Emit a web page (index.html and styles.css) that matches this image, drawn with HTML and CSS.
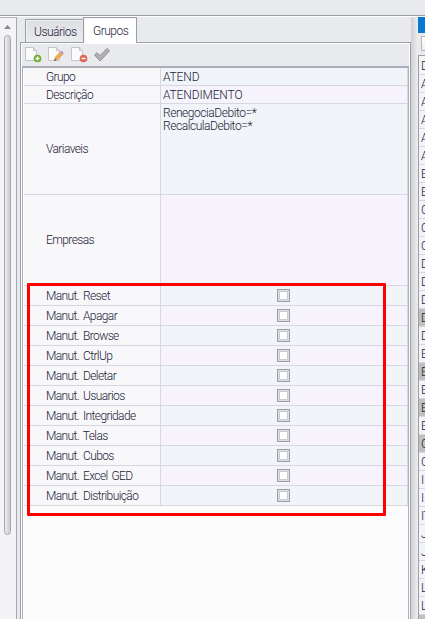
FILE: index.html
```html
<!DOCTYPE html>
<html lang="pt-BR">
<head>
<meta charset="utf-8">
<title>Grupos</title>
<link rel="stylesheet" href="styles.css">
</head>
<body>
<div class="topbar"></div>
<div class="workspace">
  <aside class="left"><div class="arrow"></div><div class="thumb"></div></aside>
  <main class="center">
    <nav class="tabs"><div class="tab">Usuários</div><div class="tab active">Grupos</div></nav>
    <section class="panel">
      <div class="toolbar">
        <svg width="18" height="18" viewBox="0 0 18 18"><path class="page" d="M.5 1.5h8l3 3v10h-11z"/><path class="fold" d="M8.5 1.5v3h3"/><circle cx="12.5" cy="12.5" r="3.8" fill="#6dac2e"/><path class="sign" d="M10.5 12.5h4M12.5 10.5v4"/></svg>
        <svg width="18" height="18" viewBox="0 0 18 18"><path class="page" d="M.5 1.5h8l3 3v10h-11z"/><path class="fold" d="M8.5 1.5v3h3"/><path d="M6.5 14.5l1-3.5 5-5 2.3 2.3-5 5z" fill="#f2ae48" stroke="#bd853e" stroke-width=".6"/><path d="M12 6l1.5-1.4 2.5 2.5-1.5 1.4z" fill="#c695c7"/><path d="M6 15l1-2.2 1.3 1.2z" fill="#554b46"/></svg>
        <svg width="18" height="18" viewBox="0 0 18 18"><path class="page" d="M.5 1.5h8l3 3v10h-11z"/><path class="fold" d="M8.5 1.5v3h3"/><circle cx="12.5" cy="12.5" r="3.8" fill="#df6554"/><path class="sign" d="M10.5 12.5h4"/></svg>
        <svg width="18" height="18" viewBox="0 0 18 18"><path d="M.5 9l2.5-2.3 3 3 7-7.2 2.5 2.2L6.2 15z" fill="#b1b1b1" stroke="#8e8e8e"/></svg>
      </div>
      <div class="grid">
        <div class="row text"><div class="label">Grupo</div><div class="value caps">ATEND</div></div>
        <div class="row text"><div class="label">Descrição</div><div class="value caps">ATENDIMENTO</div></div>
        <div class="row tall"><div class="label">Variaveis</div><div class="value vars"><span>RenegociaDebito=*</span><span>RecalculaDebito=*</span></div></div>
        <div class="row tall"><div class="label">Empresas</div><div class="value"></div></div>
        <div class="row"><div class="label">Manut. Reset</div><div class="value check"><i></i></div></div>
        <div class="row"><div class="label">Manut. Apagar</div><div class="value check"><i></i></div></div>
        <div class="row"><div class="label">Manut. Browse</div><div class="value check"><i></i></div></div>
        <div class="row"><div class="label">Manut. CtrlUp</div><div class="value check"><i></i></div></div>
        <div class="row"><div class="label">Manut. Deletar</div><div class="value check"><i></i></div></div>
        <div class="row"><div class="label">Manut. Usuarios</div><div class="value check"><i></i></div></div>
        <div class="row"><div class="label">Manut. Integridade</div><div class="value check"><i></i></div></div>
        <div class="row"><div class="label">Manut. Telas</div><div class="value check"><i></i></div></div>
        <div class="row"><div class="label">Manut. Cubos</div><div class="value check"><i></i></div></div>
        <div class="row"><div class="label">Manut. Excel GED</div><div class="value check"><i></i></div></div>
        <div class="row"><div class="label">Manut. Distribuição</div><div class="value check"><i></i></div></div>
      </div>
    </section>
  </main>
  <div class="splitter"></div>
  <aside class="right">
    <div class="title"></div>
    <div class="search"><div class="button"></div></div>
    <div class="list">
      <div class="head">D</div>
      <div>A</div><div>A</div><div>A</div><div>A</div><div>A</div>
      <div>B</div><div>B</div><div>C</div><div>C</div><div>C</div>
      <div>D</div><div>D</div><div>D</div><div class="off">D</div><div>D</div>
      <div>E</div><div class="off">E</div><div>E</div><div class="off">E</div><div>E</div>
      <div class="off">G</div><div>G</div><div>I</div><div>I</div><div>IT</div>
      <div>J</div><div>J</div><div>K</div><div>L</div><div>L</div><div class="off"></div>
    </div>
  </aside>
</div>
<div class="highlight"></div>
</body>
</html>
```
FILE: styles.css
```css
* { box-sizing: border-box; }
body {
  margin: 0;
  width: 425px;
  height: 619px;
  overflow: hidden;
  display: flex;
  flex-direction: column;
  background: #e9eaed;
  color: #1c1b35;
  font: 300 12px/14px Roboto, "Liberation Sans", sans-serif;
  letter-spacing: -0.6px;
  word-spacing: 1.5px;
}
.topbar { height: 17px; flex: none; border-bottom: 1px solid #fff; box-shadow: inset 0 -1px #9b9da8; }
.workspace { flex: 1; min-height: 0; display: flex; }
.left {
  width: 17px;
  flex: none;
  padding: 7px 0 0 4px;
  background: #f4f4f7;
  border-right: 1px solid #a5a7b2;
  border-top: 1px solid #b0b2bb;
}
.arrow { width: 7px; height: 4px; margin-bottom: 6px; background: #858793; clip-path: polygon(50% 0, 100% 100%, 0 100%); }
.thumb { width: 7px; height: 500px; border: 1px solid #a6a8b3; border-radius: 4px; background: linear-gradient(90deg, #eeeef1, #c9cad1); }
.center { width: 394px; flex: none; padding-left: 3px; display: flex; flex-direction: column; }
.tabs { height: 25px; flex: none; display: flex; align-items: flex-end; padding-left: 5px; letter-spacing: -0.5px; }
.tab {
  width: 59px;
  height: 23px;
  padding: 5px 0 0 8px;
  border: 1px solid #9b9da9;
  border-bottom: 0;
  background: linear-gradient(#dedfe3, #eaebee);
  box-shadow: inset 1px 1px #f1f2f4;
}
.tab.active { width: 54px; height: 26px; margin: 0 0 -1px -1px; padding: 6px 0 0 9px; background: #fff; position: relative; }
.panel {
  flex: 1;
  min-height: 0;
  display: flex;
  flex-direction: column;
  padding: 0 1px;
  border: 1px solid #9b9da9;
  border-bottom: 0;
  box-shadow: inset 1px 1px #fff, inset -1px 0 #fff;
}
.toolbar { height: 23px; flex: none; display: flex; gap: 5px; padding: 3px 0 0 3px; }
.page { fill: #fbfbfc; stroke: #c5c5ca; }
.fold { fill: #e4e4e8; stroke: #c5c5ca; }
.sign { stroke: #fff; stroke-width: 1.5; }
.grid { flex: 1; border: 1px solid #acaeb9; border-top-width: 2px; border-bottom: 0; padding-left: 1px; background: #fcfcfc; }
.row { height: 20px; display: flex; border-bottom: 1px solid #d7d8de; border-right: 1px solid #d7d8de; background: #f1f5fa; }
.row:nth-child(even) { background: #f6f3fd; }
.row.text { height: 18px; }
.row.tall { height: 91px; }
.label { width: 137px; flex: none; padding-left: 22px; display: flex; align-items: center; background: #f8f8fb; border-right: 1px solid #d7d8de; }
.value { flex: 1; padding-left: 2px; display: flex; align-items: center; }
.caps { letter-spacing: -0.15px; }
.vars { flex-direction: column; align-items: flex-start; padding-top: 3px; line-height: 13px; letter-spacing: -0.45px; }
.check { justify-content: center; padding: 0 1px 0 0; }
.check i { width: 13px; height: 13px; border: 1px solid #9b9ea7; background: #fff; box-shadow: inset 0 0 0 1px #dedfe2, inset 0 0 0 2px #c9cbd0; }
.splitter { width: 7px; flex: none; background: linear-gradient(90deg, #d0d0d2, #eeeeef); }
.right { width: 7px; flex: none; overflow: hidden; }
.title { height: 16px; background: #0878d4; }
.search { height: 22px; padding: 3px 0 0 3px; }
.button { width: 16px; height: 15px; border: 1px solid #b6b7be; background: linear-gradient(#fff, #eee); }
.list { border-left: 1px solid #9b9da9; border-top: 1px solid #9b9da9; }
.list div { width: 24px; height: 18px; padding: 2px 0 0 2px; border-bottom: 1px solid #d7d8de; background: #f6f3fd; }
.list div:nth-child(even) { background: #f1f5fa; }
.list .head { height: 19px; padding-top: 3px; background: #f6f6f8; }
.list div.off { background: #c0c0c0; }
.highlight { position: absolute; left: 27px; top: 283px; width: 359px; height: 233px; border: 3px solid #f00; border-radius: 1px; }
```
